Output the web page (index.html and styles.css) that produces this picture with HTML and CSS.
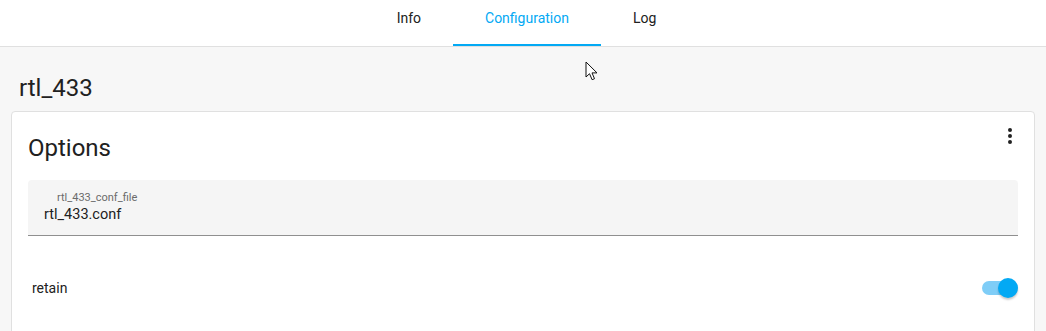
FILE: index.html
```html
<!DOCTYPE html>
<html lang="en">
<head>
<meta charset="UTF-8">
<title>rtl_433 - Configuration</title>
<link rel="stylesheet" href="styles.css">
</head>
<body>

<div class="tabs">
    <div class="tab">Info</div>
    <div class="tab active">Configuration</div>
    <div class="tab">Log</div>
</div>

<div class="content">
    <h1 class="title">rtl_433</h1>

    <div class="card">
        <div class="card-header">
            <h2>Options</h2>
            <button class="menu" aria-label="menu">
                <svg width="24" height="24" viewBox="0 0 24 24"><path d="M12 16a2 2 0 1 1 0 4a2 2 0 0 1 0-4m0-6a2 2 0 1 1 0 4a2 2 0 0 1 0-4m0-6a2 2 0 1 1 0 4a2 2 0 0 1 0-4z" fill="#212121"/></svg>
            </button>
        </div>

        <div class="card-body">
            <div class="field">
                <span class="field-label">rtl_433_conf_file</span>
                <span class="field-value">rtl_433.conf</span>
            </div>

            <div class="row">
                <span>retain</span>
                <div class="switch on">
                    <div class="track"></div>
                    <div class="thumb"></div>
                </div>
            </div>
        </div>
    </div>
</div>

<svg class="cursor" width="14" height="22" viewBox="0 0 14 22"><path d="M1 1v15l3.5-3.3 2.6 6 2.4-1-2.5-5.8H12z" fill="#fff" stroke="#111" stroke-width="1"/></svg>

</body>
</html>
```

FILE: styles.css
```css
:root{
    --primary:#03a9f4;
    --text:#212121;
    --bg:#f7f7f7;
    --border:#e0e0e0;
}

*{
    box-sizing:border-box;
    font-family:Roboto, "Noto Sans", sans-serif;
}

body{
    margin:0;
    background:var(--bg);
    color:var(--text);
    height:331px;
    overflow:hidden;
}

/* tabs */
.tabs{
    display:flex;
    justify-content:center;
    height:47px;
    padding-left:7px;
    background:#fff;
    border-bottom:1px solid var(--border);
}

.tab{
    padding:8px 32px 0;
    font-size:14px;
    line-height:20px;
    color:var(--text);
    border-bottom:2px solid transparent;
    height:46px;
}

.tab.active{
    color:var(--primary);
    border-bottom-color:var(--primary);
}

/* content */
.content{
    padding:0 11px;
}

.title{
    margin:25px 0 7px 8px;
    font-size:24px;
    font-weight:400;
    line-height:32px;
}

/* card */
.card{
    background:#fff;
    border:1px solid var(--border);
    border-radius:4px;
    height:400px;
}

.card-header{
    display:flex;
    justify-content:space-between;
    align-items:flex-start;
    padding:20px 16px 0;
}

.card-header h2{
    margin:0;
    font-size:24px;
    font-weight:400;
    line-height:32px;
}

.menu{
    border:none;
    background:none;
    padding:0;
    margin:-8px -4px 0 0;
    width:24px;
    height:24px;
    cursor:pointer;
}

.card-body{
    padding:16px 16px 0;
}

/* text field */
.field{
    display:flex;
    flex-direction:column;
    height:56px;
    background:#f5f5f5;
    border-radius:4px 4px 0 0;
    border-bottom:1px solid #8f8f8f;
    padding:11px 16px 0;
}

.field-label{
    font-size:11px;
    line-height:14px;
    color:#6b6b6b;
    padding-left:13px;
}

.field-value{
    font-size:14.5px;
    line-height:20px;
}

/* toggle row */
.row{
    display:flex;
    justify-content:space-between;
    align-items:center;
    height:48px;
    margin-top:28px;
    padding:0 0 0 4px;
    font-size:14px;
}

.switch{
    position:relative;
    width:36px;
    height:20px;
}

.track{
    position:absolute;
    left:0;
    top:3px;
    width:32px;
    height:14px;
    border-radius:7px;
    background:#7fcdf7;
}

.thumb{
    position:absolute;
    left:16px;
    top:0;
    width:20px;
    height:20px;
    border-radius:50%;
    background:var(--primary);
    box-shadow:0 2px 2px rgba(0,0,0,.2);
}

.cursor{
    position:absolute;
    left:585px;
    top:61px;
}
```
